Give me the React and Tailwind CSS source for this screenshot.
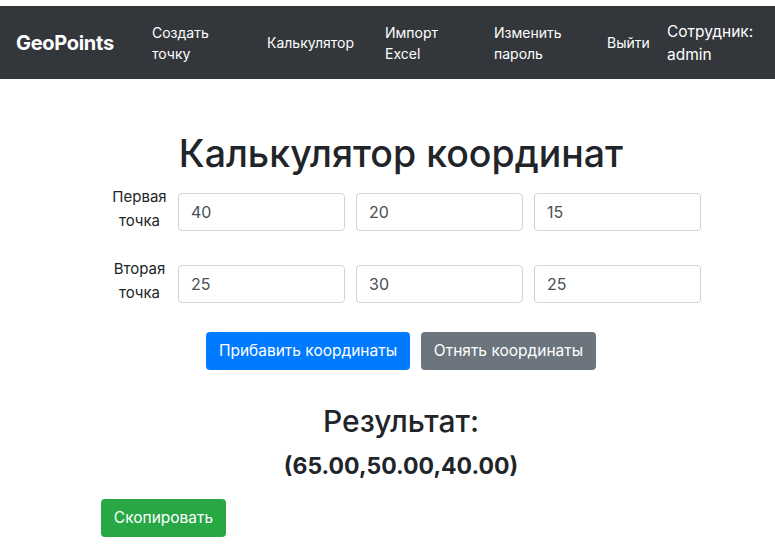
export default function App() {
  const font = { fontFamily: 'Inter, "Liberation Sans", Arial, sans-serif' };
  const row = (label, vals) => (
    <div className="flex h-[38px] items-center">
      <div className="w-[77px] pb-[6px] text-center text-[15px] leading-[24px]">{label[0]}<br />{label[1]}</div>
      <div className="flex gap-[11px]">
        {vals.map((v, i) => (
          <div key={i} className="flex h-[38px] w-[167px] items-center rounded-[4px] border border-[#ced4da] px-[12px] text-[16px] text-[#495057]">{v}</div>
        ))}
      </div>
    </div>
  );
  return (
    <div className="min-h-[547px] bg-white text-[#212529]" style={font}>
      <div className="h-[6px]" />
      <nav className="flex h-[73px] items-center bg-[#33373b] text-white">
        <div className="w-[152px] pl-[16px] text-[20px] font-bold tracking-[-0.3px]">GeoPoints</div>
        <div className="w-[115px] text-[14px] leading-[21px]">Создать<br />точку</div>
        <div className="w-[118px] text-[14px] leading-[21px]">Калькулятор</div>
        <div className="w-[109px] text-[14px] leading-[21px]">Импорт<br />Excel</div>
        <div className="w-[113px] text-[14px] leading-[21px]">Изменить<br />пароль</div>
        <div className="w-[60px] text-[14px] leading-[21px]">Выйти</div>
        <div className="text-[15.5px] leading-[23px]">Сотрудник:<br />admin</div>
      </nav>
      <main className="ml-[101px] w-[600px] pt-[52px]">
        <h1 className="text-center text-[37.5px] font-medium leading-[46px]">Калькулятор координат</h1>
        <div className="mt-[16px]">{row(["Первая", "точка"], ["40", "20", "15"])}</div>
        <div className="mt-[34px]">{row(["Вторая", "точка"], ["25", "30", "25"])}</div>
        <div className="mt-[29px] flex justify-center gap-[11px]">
          <button className="h-[38px] w-[204px] rounded-[4px] bg-[#007bff] text-[15.5px] text-white">Прибавить координаты</button>
          <button className="h-[38px] w-[175px] rounded-[4px] bg-[#6c757d] text-[15.5px] text-white">Отнять координаты</button>
        </div>
        <h3 className="mt-[33px] text-center text-[30px] font-medium leading-[36px]">Результат:</h3>
        <div className="mt-[13px] text-center text-[23px] font-bold leading-[28px]">(65.00,50.00,40.00)</div>
        <button className="mt-[19px] h-[38px] w-[125px] rounded-[4px] bg-[#28a745] text-[15.5px] text-white">Скопировать</button>
      </main>
    </div>
  );
}
